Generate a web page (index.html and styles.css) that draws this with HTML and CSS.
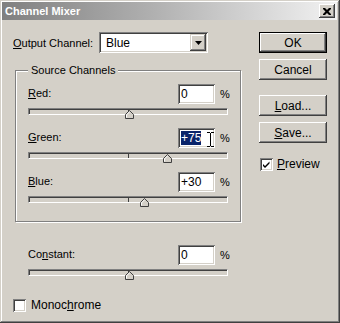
FILE: index.html
```html
<!DOCTYPE html>
<html>
<head>
<meta charset="utf-8">
<link rel="stylesheet" href="styles.css">
</head>
<body>
<div class="window">
  <div class="titlebar">
    <span class="title">Channel Mixer</span>
    <span class="close"><svg width="8" height="7" viewBox="0 0 8 7"><path d="M0 0h2l2 2 2-2h2v1L5.5 3.5 8 6v1H6L4 5 2 7H0V6l2.5-2.5L0 1z" fill="#000"/></svg></span>
  </div>
  <div class="client">
    <div class="left">
      <div class="output-row">
        <span class="output-label"><u>O</u>utput Channel:</span>
        <div class="select">
          <span class="select-value">Blue</span>
          <span class="select-btn"><svg width="7" height="4" viewBox="0 0 7 4"><path d="M0 0h7L3.5 4z" fill="#000"/></svg></span>
        </div>
      </div>

      <div class="group">
        <span class="legend">Source Channels</span>
        <div class="channel">
          <div class="ch-head">
            <span class="ch-label"><u>R</u>ed:</span>
            <span class="field">0</span>
            <span class="pct">%</span>
          </div>
          <div class="track"><span class="tick"></span><svg class="thumb" style="left:96px" width="9" height="9" viewBox="0 0 9 9"><path d="M0.5 8.5V4.5L4.5 0.5L8.5 4.5V8.5Z" fill="#d4d0c8" stroke="#404040"/><path d="M1.5 7.5V4.9L4.5 1.9" fill="none" stroke="#fff"/></svg></div>
        </div>
        <div class="channel">
          <div class="ch-head">
            <span class="ch-label"><u>G</u>reen:</span>
            <span class="field"><span class="sel">+75</span></span>
            <span class="pct">%</span>
            <svg class="ibeam" width="7" height="15" viewBox="0 0 7 15"><path d="M0 0.5H3M4 0.5H7M3.5 1V14M0 14.5H3M4 14.5H7" stroke="#000" fill="none"/></svg>
          </div>
          <div class="track"><span class="tick"></span><svg class="thumb" style="left:134px" width="9" height="9" viewBox="0 0 9 9"><path d="M0.5 8.5V4.5L4.5 0.5L8.5 4.5V8.5Z" fill="#d4d0c8" stroke="#404040"/><path d="M1.5 7.5V4.9L4.5 1.9" fill="none" stroke="#fff"/></svg></div>
        </div>
        <div class="channel">
          <div class="ch-head">
            <span class="ch-label"><u>B</u>lue:</span>
            <span class="field">+30</span>
            <span class="pct">%</span>
          </div>
          <div class="track"><span class="tick"></span><svg class="thumb" style="left:111px" width="9" height="9" viewBox="0 0 9 9"><path d="M0.5 8.5V4.5L4.5 0.5L8.5 4.5V8.5Z" fill="#d4d0c8" stroke="#404040"/><path d="M1.5 7.5V4.9L4.5 1.9" fill="none" stroke="#fff"/></svg></div>
        </div>
      </div>

      <div class="channel constant">
        <div class="ch-head">
          <span class="ch-label">Co<u>n</u>stant:</span>
          <span class="field">0</span>
          <span class="pct">%</span>
        </div>
        <div class="track"><span class="tick"></span><svg class="thumb" style="left:96px" width="9" height="9" viewBox="0 0 9 9"><path d="M0.5 8.5V4.5L4.5 0.5L8.5 4.5V8.5Z" fill="#d4d0c8" stroke="#404040"/><path d="M1.5 7.5V4.9L4.5 1.9" fill="none" stroke="#fff"/></svg></div>
      </div>

      <div class="check mono"><span class="box"></span><span>Monoc<u>h</u>rome</span></div>
    </div>

    <div class="right">
      <div class="btn default"><span class="btn-inner">OK</span></div>
      <div class="btn cancel">Cancel</div>
      <div class="btn load"><span><u>L</u>oad...</span></div>
      <div class="btn save"><span><u>S</u>ave...</span></div>
      <div class="check preview"><span class="box"><svg width="9" height="9" viewBox="0 0 9 9"><path d="M1 4L3 6L7.5 1.5V3.5L3 8L1 6Z" fill="#000"/></svg></span><span><u>P</u>review</span></div>
    </div>
  </div>
</div>
</body>
</html>
```

FILE: styles.css
```css
* { box-sizing: border-box; }
html, body { margin: 0; padding: 0; background: #d4d0c8; }
body {
  font-family: "Liberation Sans", Arial, sans-serif;
  font-size: 11px;
  color: #000;
}
u { text-decoration: underline; text-underline-offset: 1px; }

.window {
  width: 340px;
  height: 323px;
  background: #d4d0c8;
  padding: 2px 3px 3px 2px;
  box-shadow: inset -1px -1px 0 #404040, inset 1px 1px 0 #d4d0c8,
              inset -2px -2px 0 #808080, inset 2px 2px 0 #fff;
  overflow: hidden;
}

.titlebar {
  height: 18px;
  display: flex;
  align-items: center;
  justify-content: space-between;
  padding: 0 2px 0 3px;
  background: linear-gradient(to right, #808080 0%, #b0b0b0 45%, #f2f2f2 100%);
}
.title {
  color: #fff;
  font-weight: bold;
  font-size: 11px;
}
.close {
  width: 16px;
  height: 14px;
  display: flex;
  align-items: center;
  justify-content: center;
  background: #d4d0c8;
  box-shadow: inset -1px -1px 0 #404040, inset 1px 1px 0 #fff,
              inset -2px -2px 0 #808080;
}

.client {
  display: flex;
  padding: 12px 0 0 11px;
}

.left { width: 228px; display: flex; flex-direction: column; }

.output-row { display: flex; align-items: center; height: 21px; }
.output-label { width: 86px; }
.select {
  width: 109px;
  height: 21px;
  background: #fff;
  display: flex;
  align-items: center;
  justify-content: space-between;
  padding: 2px;
  box-shadow: inset 1px 1px 0 #808080, inset -1px -1px 0 #fff,
              inset 2px 2px 0 #404040, inset -2px -2px 0 #d4d0c8;
}
.select-value { padding-left: 5px; font-size: 12px; }
.select-btn {
  width: 16px;
  height: 17px;
  display: flex;
  align-items: center;
  justify-content: center;
  background: #d4d0c8;
  box-shadow: inset -1px -1px 0 #404040, inset 1px 1px 0 #d4d0c8,
              inset -2px -2px 0 #808080, inset 2px 2px 0 #fff;
}

.group {
  position: relative;
  margin: 17px 0 0 2px;
  width: 226px;
  height: 152px;
  border: 1px solid #808080;
  box-shadow: inset 1px 1px 0 #fff, 1px 1px 0 #fff;
  padding: 13px 12px 18px 12px;
  display: flex;
  flex-direction: column;
  gap: 13px;
}
.legend {
  position: absolute;
  top: -7px;
  left: 12px;
  padding: 0 3px;
  background: #d4d0c8;
  line-height: 13px;
  font-size: 11px;
}

.channel { width: 200px; }
.ch-head {
  position: relative;
  display: flex;
  align-items: center;
  height: 20px;
}
.ch-label { flex: 1; margin-top: -3px; }
.field {
  width: 37px;
  height: 20px;
  background: #fff;
  padding: 3px 2px 0 3px;
  line-height: 14px;
  font-size: 12px;
  box-shadow: inset 1px 1px 0 #808080, inset -1px -1px 0 #fff,
              inset 2px 2px 0 #404040, inset -2px -2px 0 #d4d0c8;
}
.sel { background: #0a246a; color: #fff; }
.pct { width: 8px; margin-left: 5px; }
.ibeam { position: absolute; left: 179px; top: 4px; }

.track {
  position: relative;
  margin-top: 4px;
  height: 7px;
  background: #d4d0c8;
  border-top: 1px solid #808080;
  border-left: 1px solid #808080;
  border-bottom: 1px solid #fff;
  border-right: 1px solid #fff;
  box-shadow: inset 1px 1px 0 #404040, inset -1px -1px 0 #d4d0c8;
}
.tick {
  position: absolute;
  left: 99px;
  top: 0;
  width: 1px;
  height: 5px;
  background: #404040;
}
.thumb { position: absolute; top: 1px; }

.constant { margin: 23px 0 0 15px; }

.check { display: flex; align-items: center; }
.box {
  width: 13px;
  height: 13px;
  background: #fff;
  display: flex;
  align-items: center;
  justify-content: center;
  box-shadow: inset 1px 1px 0 #808080, inset -1px -1px 0 #fff,
              inset 2px 2px 0 #404040, inset -2px -2px 0 #d4d0c8;
}
.mono { margin-top: 22px; gap: 5px; font-size: 12px; }

.right {
  width: 68px;
  margin-left: 18px;
  display: flex;
  flex-direction: column;
}
.btn {
  height: 21px;
  display: flex;
  align-items: center;
  justify-content: center;
  background: #d4d0c8;
  font-size: 12px;
  box-shadow: inset -1px -1px 0 #404040, inset 1px 1px 0 #fff,
              inset -2px -2px 0 #808080, inset 2px 2px 0 #d4d0c8;
}
.btn.default {
  border: 1px solid #000;
  box-shadow: inset -1px -1px 0 #404040, inset 1px 1px 0 #fff,
              inset -2px -2px 0 #808080;
}
.cancel { margin-top: 6px; }
.load { margin-top: 15px; }
.save { margin-top: 6px; }
.preview { margin-top: 14px; margin-left: 1px; gap: 4px; font-size: 12px; }
```
